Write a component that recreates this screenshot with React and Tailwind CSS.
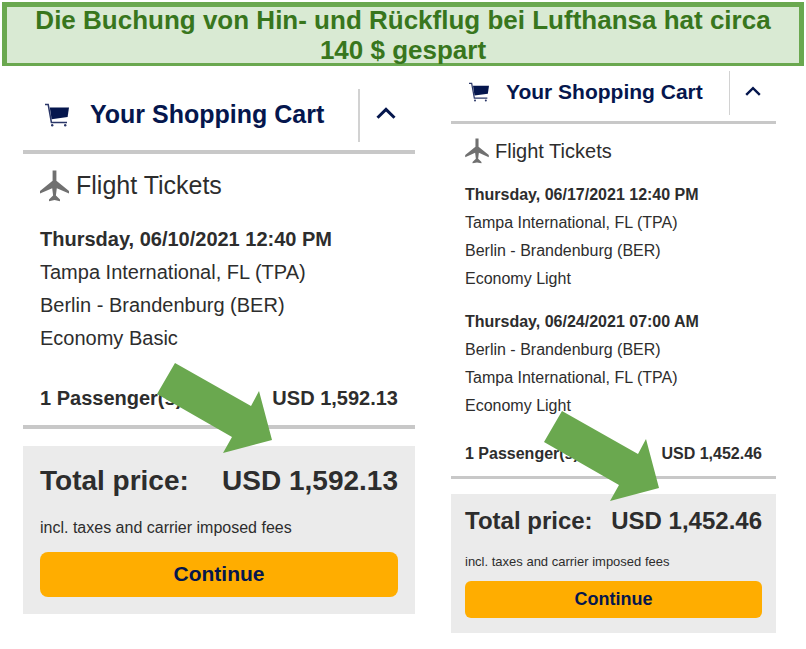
const LARGE = {
  header: "mt-[21px] pb-2 border-b-4 pl-[22px]",
  titleRow: "gap-[21px] text-[25px]",
  cart: "w-6 h-6",
  toggle: "w-[57px] h-[53px] pr-1 border-l-2",
  chevron: "w-5 h-3",
  details: "px-[17px] pt-[14px] pb-[10px] border-b-4",
  tickets: "h-9 text-[25px] gap-[7px]",
  plane: "w-[29px] h-8",
  leg: "mt-[19px] text-xl leading-[33px]",
  passengers: "mt-[27px] text-xl leading-[33px]",
  total: "mt-[17px] px-[17px] py-[17px]",
  totalRow: "text-[28px] leading-9",
  note: "mt-[19px] text-base leading-5",
  button: "mt-[14px] h-[45px] text-[21px] rounded-lg",
  arrow: "left-[134px] -top-[83px]",
};

const SMALL = {
  header: "mt-[3px] pb-[6px] border-b-3 pl-[18px]",
  titleRow: "gap-[17px] text-[21px]",
  cart: "w-5 h-5",
  toggle: "w-[47px] h-11 border-l",
  chevron: "w-4 h-[10px]",
  details: "px-[14px] pt-3 pb-2 border-b-3",
  tickets: "h-[30px] text-xl gap-[6px]",
  plane: "w-6 h-[26px]",
  leg: "mt-[15px] text-base leading-7",
  passengers: "mt-5 text-base leading-7",
  total: "mt-[15px] px-[14px] pt-3 pb-[15px]",
  totalRow: "text-2xl leading-[30px]",
  note: "mt-[17px] text-[13px] leading-[18px]",
  button: "mt-[10px] h-[37px] text-lg rounded-md",
  arrow: "left-[93px] -top-[83px]",
};

const CARTS = [
  {
    size: LARGE,
    price: "USD 1,592.13",
    legs: [
      {
        date: "Thursday, 06/10/2021 12:40 PM",
        lines: ["Tampa International, FL (TPA)", "Berlin - Brandenburg (BER)", "Economy Basic"],
      },
    ],
  },
  {
    size: SMALL,
    price: "USD 1,452.46",
    legs: [
      {
        date: "Thursday, 06/17/2021 12:40 PM",
        lines: ["Tampa International, FL (TPA)", "Berlin - Brandenburg (BER)", "Economy Light"],
      },
      {
        date: "Thursday, 06/24/2021 07:00 AM",
        lines: ["Berlin - Brandenburg (BER)", "Tampa International, FL (TPA)", "Economy Light"],
      },
    ],
  },
];

function CartIcon({ className }) {
  return (
    <svg viewBox="0 0 24 24" className={className} aria-hidden="true">
      <path d="M0 1.6H3.2L6.4 19.4H22" fill="none" stroke="#2b3768" strokeWidth="1.5" />
      <path d="M4.8 4.6H24L22.6 14L6.6 16.2Z" fill="#05164d" />
      <circle cx="7.2" cy="22.3" r="1.2" fill="#2b3768" />
      <circle cx="20.2" cy="22.3" r="1.2" fill="#2b3768" />
    </svg>
  );
}

function PlaneIcon({ className }) {
  return (
    <svg viewBox="0 0 29 32" className={className} aria-hidden="true">
      <path
        d="M12.6 0.5H16.4V10.8L29 21V23.6L16.8 18.2L15.9 25.6L20 29.4V31.2L14.5 30L9 31.2V29.4L13.1 25.6L12.2 18.2L0 23.6V21L12.6 10.8Z"
        fill="#707070"
      />
    </svg>
  );
}

function ChevronUp({ className }) {
  return (
    <svg viewBox="0 0 20 12" className={className} aria-hidden="true">
      <path d="M1.5 10.8L10 2.4L18.5 10.8" fill="none" stroke="#05164d" strokeWidth="3" />
    </svg>
  );
}

function Arrow({ className }) {
  return (
    <svg viewBox="0 0 116 91" className={"absolute w-[116px] h-[91px] pointer-events-none " + className} aria-hidden="true">
      <path d="M18 0L94 43L102 28L115 77L66 90L75 74L0 31Z" fill="#6aa84f" />
    </svg>
  );
}

function ShoppingCart({ size, price, legs }) {
  return (
    <section>
      <header className={"flex items-center justify-between border-[#c8c8c8] " + size.header}>
        <h2 className={"flex items-center pb-[2px] font-bold whitespace-nowrap text-[#05164d] " + size.titleRow}>
          <CartIcon className={size.cart} />
          Your Shopping Cart
        </h2>
        <button
          type="button"
          aria-label="Collapse cart"
          className={"flex items-center justify-center border-[#d2d2d2] pb-[5px] " + size.toggle}
        >
          <ChevronUp className={size.chevron} />
        </button>
      </header>

      <div className={"border-[#c8c8c8] " + size.details}>
        <h3 className={"flex items-center " + size.tickets}>
          <PlaneIcon className={size.plane} />
          Flight Tickets
        </h3>
        {legs.map((leg) => (
          <div key={leg.date} className={"whitespace-nowrap " + size.leg}>
            <p className="font-bold">{leg.date}</p>
            {leg.lines.map((line) => (
              <p key={line}>{line}</p>
            ))}
          </div>
        ))}
        <div className={"flex justify-between font-bold whitespace-nowrap " + size.passengers}>
          <span>1 Passenger(s)</span>
          <span>{price}</span>
        </div>
      </div>

      <div className={"relative bg-[#ebebeb] " + size.total}>
        <div className={"flex justify-between font-bold whitespace-nowrap " + size.totalRow}>
          <span>Total price:</span>
          <span>{price}</span>
        </div>
        <p className={size.note}>incl. taxes and carrier imposed fees</p>
        <button
          type="button"
          className={"flex w-full items-center justify-center bg-[#ffad00] pb-[2px] font-bold text-[#05164d] " + size.button}
        >
          Continue
        </button>
        <Arrow className={size.arrow} />
      </div>
    </section>
  );
}

export default function App() {
  return (
    <main className="bg-white font-['Liberation_Sans',Arial,sans-serif] text-[#2d2d2d]">
      <div className="p-[2px]">
        <div className="flex h-16 items-center justify-center border-x-5 border-t-5 border-b-3 border-[#6aa84f] bg-[#d9ead3] px-5">
          <h1 className="text-center text-[26px] leading-[30px] font-bold text-[#38761d]">
            Die Buchung von Hin- und Rückflug bei Lufthansa hat circa 140 $ gespart
          </h1>
        </div>
      </div>
      <div className="grid grid-cols-[392fr_325fr] items-start gap-9 pr-[30px] pl-[23px]">
        {CARTS.map((cart) => (
          <ShoppingCart key={cart.price} {...cart} />
        ))}
      </div>
    </main>
  );
}
